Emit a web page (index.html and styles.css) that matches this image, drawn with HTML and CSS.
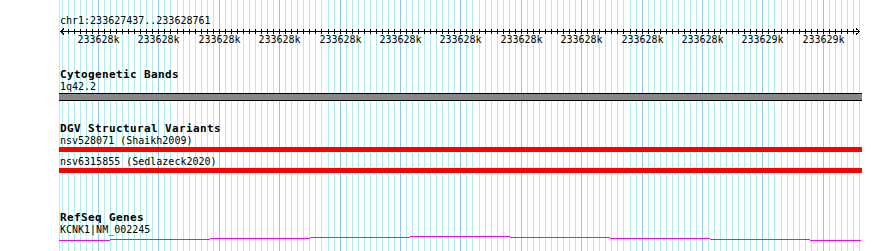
FILE: index.html
```html
<!DOCTYPE html>
<html lang="en">
<head>
  <meta charset="UTF-8">
  <title>Genome Browser - chr1:233627437..233628761</title>
  <link rel="stylesheet" href="styles.css">
</head>
<body>
  <div class="browser">
    <svg class="guides" width="890" height="251">
      <path class="guide-light" id="guideLight" d=""/>
      <path class="guide-major" id="guideMajor" d=""/>
    </svg>

    <div class="tracks">
      <div class="position">chr1:233627437..233628761</div>
      <svg class="ruler" width="803" height="18">
        <path class="ruler-line" d="M1 4.5H801M5 1.5L1.5 4.5L5 7.5M797 1.5L800.5 4.5L797 7.5"/>
        <path class="ruler-line" id="rulerTicks" d=""/>
        <g class="ruler-labels" id="rulerLabels"></g>
      </svg>

      <div class="track cyto">
        <div class="track-title">Cytogenetic Bands</div>
        <div class="feature-label">1q42.2</div>
        <div class="band"></div>
      </div>

      <div class="track dgv">
        <div class="track-title">DGV Structural Variants</div>
        <div class="feature-label">nsv528071 (Shaikh2009)</div>
        <div class="variant"></div>
        <div class="feature-label second">nsv6315855 (Sedlazeck2020)</div>
        <div class="variant"></div>
      </div>

      <div class="track refseq">
        <div class="track-title">RefSeq Genes</div>
        <div class="feature-label">KCNK1|NM_002245</div>
        <svg class="gene" width="803" height="7">
          <path d="M0 5.5H51M51 4.5H151M151 3.5H251M251 2.5H351M351 1.5H451M451 2.5H551M551 3.5H651M651 4.5H751M751 5.5H802"/>
        </svg>
      </div>
    </div>
  </div>

<script>
  // view: 1325 bp drawn over 800 px, a guide every 10 bp, major every 100 bp
  const pxPerTick = 6.04;
  const majorStart = 98;

  let light = "M59.5 0V251";
  let major = "";
  let ticks = "";
  let labels = "";
  for (let k = -6; majorStart + k * pxPerTick <= 861; k++) {
    const x = Math.round(majorStart + k * pxPerTick);
    if (k >= 0 && k % 10 === 0) {
      major += "M" + (x + 0.5) + " 0V251";
      const kb = k / 10 < 11 ? "233628k" : "233629k";
      labels += '<text x="' + (x - 59 + 0.5) + '" y="16">' + kb + "</text>";
    } else {
      light += "M" + (x + 0.5) + " 0V251";
    }
    if (x < 858) {
      ticks += "M" + (x - 59 + 0.5) + " 2V7";
    }
  }
  document.getElementById("guideLight").setAttribute("d", light);
  document.getElementById("guideMajor").setAttribute("d", major);
  document.getElementById("rulerTicks").setAttribute("d", ticks);
  document.getElementById("rulerLabels").innerHTML = labels;
</script>
</body>
</html>
```

FILE: styles.css
```css
body {
  margin: 0;
  background: #ffffff;
  font-family: 'DejaVu Sans Mono', monospace;
  color: #000000;
}

.browser {
  position: relative;
  width: 890px;
  height: 251px;
  overflow: hidden;
}

.guides {
  position: absolute;
  top: 0;
  left: 0;
}

.guide-light {
  stroke: #aeeeee;
  stroke-width: 1;
  shape-rendering: crispEdges;
}

.guide-major {
  stroke: #8ecbeb;
  stroke-width: 1;
  shape-rendering: crispEdges;
}

.tracks {
  position: relative;
  width: 803px;
  padding: 15px 0 0 59px;
}

.position {
  font-size: 10px;
  line-height: 12px;
  padding-left: 1px;
}

.ruler {
  display: block;
}

.ruler-line {
  fill: none;
  stroke: #000000;
  stroke-width: 1;
  shape-rendering: crispEdges;
}

.ruler-labels {
  font-family: 'DejaVu Sans Mono', monospace;
  font-size: 10px;
  text-anchor: middle;
  fill: #000000;
}

.track-title {
  font-size: 11px;
  font-weight: bold;
  letter-spacing: 0.38px;
  line-height: 12px;
  padding-left: 1px;
}

.feature-label {
  font-size: 10px;
  line-height: 11px;
  padding-left: 1px;
}

.cyto {
  margin-top: 24px;
}

.dgv {
  margin-top: 22px;
}

.refseq {
  margin-top: 39px;
}

.band {
  height: 6px;
  margin-top: 1px;
  background: #888888;
  border-top: 1px solid #000000;
  border-bottom: 1px solid #000000;
}

.variant {
  height: 5px;
  margin-top: 1px;
  background: #ff0000;
}

.feature-label.second {
  margin-top: 4px;
}

.gene {
  display: block;
}

.gene path {
  fill: none;
  stroke: #ff00ff;
  stroke-width: 1;
  shape-rendering: crispEdges;
}
```
